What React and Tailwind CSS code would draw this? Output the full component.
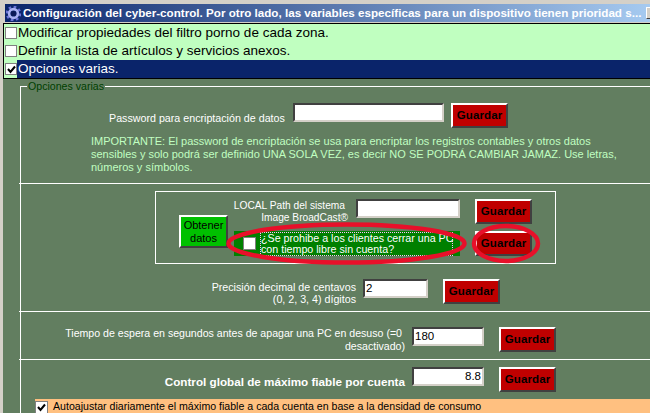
const GuardarButton = ({ className = "" }) => (
  <button
    type="button"
    className={`flex h-[25px] w-[57px] shrink-0 items-center justify-center border-2 border-t-white border-l-white border-r-[#404040] border-b-[#404040] bg-[#c00000] text-[11.5px] font-bold tracking-[0.1px] text-black ${className}`}
  >
    Guardar
  </button>
);

const TextBox = ({ className = "", value = "", right = false }) => (
  <div
    className={`flex h-[19px] shrink-0 items-center border-2 border-t-[#404040] border-l-[#404040] border-r-[#d4d0c8] border-b-[#d4d0c8] bg-white px-px text-[11.5px] text-black ${right ? "justify-end" : ""} ${className}`}
  >
    {value}
  </div>
);

const CheckMark = ({ size }) => (
  <svg width={size} height={size} viewBox="0 0 9 9">
    <path d="M1 4 L3.5 7 L8 1.5" fill="none" stroke="#000" strokeWidth="2" />
  </svg>
);

const CheckRow = ({ label, checked, selected }) => (
  <div className="flex h-[18px] items-center">
    <div className="ml-px flex h-[12px] w-[12px] shrink-0 items-center justify-center border border-[#808080] bg-white">
      {checked ? <CheckMark size={9} /> : null}
    </div>
    <div
      className={`flex h-[18px] grow items-center pl-px text-[13.5px] ${
        selected ? "bg-[#0a246a] text-white" : "text-black"
      }`}
    >
      {label}
    </div>
  </div>
);

const GearIcon = () => (
  <svg width="15" height="15" viewBox="0 0 15 15" className="shrink-0">
    <circle cx="7.5" cy="7.5" r="6.6" fill="none" stroke="#6c74d8" strokeWidth="2.4" strokeDasharray="2.6 2.58" />
    <circle cx="7.5" cy="7.5" r="4.4" fill="none" stroke="#a8b0f0" strokeWidth="2.6" />
    <circle cx="7.5" cy="7.5" r="2.6" fill="#0a1a58" />
  </svg>
);

const App = () => {
  return (
    <div
      className="relative h-[413px] w-[650px] overflow-hidden bg-[#d4d0c8] pt-1 pl-[3px]"
      style={{ fontFamily: '"Liberation Sans", Arial, sans-serif' }}
    >
      <div className="ml-[2px] flex h-[18px] items-center bg-[linear-gradient(90deg,#0a246a,#a6caf0)] pl-px">
        <GearIcon />
        <div className="ml-[2px] w-[623px] shrink-0 text-[11.65px] font-bold whitespace-nowrap text-white">
          Configuración del cyber-control. Por otro lado, las variables específicas para un dispositivo tienen prioridad s...
        </div>
        <div className="h-[12px] w-[6px] shrink-0 border border-t-white border-l-white border-r-[#404040] border-b-[#404040] bg-[#d4d0c8]" />
      </div>

      <div className="mt-px border-y border-l border-black bg-[#c0ffc0]">
        <CheckRow label="Modificar propiedades del filtro porno de cada zona." />
        <CheckRow label="Definir la lista de artículos y servicios anexos." />
        <CheckRow label="Opciones varias." checked selected />
      </div>

      <div className="h-[335px] bg-[#627e60] pt-[7px] pl-[17px]">
        <div className="relative h-full border-t border-l border-white">
          <div className="absolute -top-[8px] left-[6px] bg-[#627e60] px-px text-[10.6px] leading-[14px] text-[#004000]">
            Opciones varias
          </div>

          <div className="-ml-[2px] h-[97px] border-b border-white pt-[16px] pl-[2px]">
            <div className="flex items-start">
              <div className="mt-[8px] w-[272px] pl-[88px] text-[10.7px] leading-[14px] whitespace-nowrap text-white">
                Password para encriptación de datos
              </div>
              <TextBox className="w-[151px]" />
              <GuardarButton className="ml-[7px]" />
            </div>
            <p className="mt-[7px] ml-[70px] text-[11px] leading-[13px] whitespace-nowrap text-[#c0ffc0]">
              IMPORTANTE: El password de encriptación se usa para encriptar los registros contables y otros datos
              <br />
              sensibles y solo podrá ser definido UNA SOLA VEZ, es decir NO SE PODRÁ CAMBIAR JAMAZ. Use letras,
              <br />
              números y símbolos.
            </p>
          </div>

          <div className="mt-[7px] ml-[134px] flex h-[73px] w-[401px] items-start border border-white pt-[7px] pl-[23px]">
            <button
              type="button"
              className="mt-[16px] h-[33px] w-[49px] shrink-0 border-2 border-t-white border-l-white border-r-[#404040] border-b-[#404040] bg-[#00c000] text-[11px] leading-[13px] text-black"
            >
              Obtener datos
            </button>
            <div className="ml-[2px] flex flex-col">
              <div className="flex items-start">
                <div className="mt-px w-[115px] text-right text-[10.2px] leading-[12px] whitespace-nowrap text-white">
                  <div>LOCAL Path del sistema</div>
                  <div className="-mr-[3px]">Image BroadCast®</div>
                </div>
                <TextBox className="ml-[11px] w-[104px]" />
                <GuardarButton className="ml-[15px]" />
              </div>
              <div className="mt-[7px] flex items-start">
                <div className="ml-[4px] flex h-[25px] w-[226px] items-center bg-[#008000]">
                  <div className="ml-[9px] h-[13px] w-[13px] shrink-0 border border-[#808080] bg-white" />
                  <div className="ml-[4px] w-[193px] border border-dotted border-[#ffc0ff] text-[10.7px] leading-[11px] whitespace-nowrap text-white">
                    ¿Se prohibe a los clientes cerrar una PC
                    <br />
                    con tiempo libre sin cuenta?
                  </div>
                </div>
                <GuardarButton className="ml-[15px]" />
              </div>
            </div>
          </div>

          <div className="-ml-[2px] flex h-[48px] items-start border-b border-white pt-[15px] pl-[2px]">
            <div className="mt-[2px] w-[335px] text-right text-[10.7px] leading-[12px] whitespace-nowrap text-white">
              <div>Precisión decimal de centavos</div>
              <div>(0, 2, 3, 4) dígitos</div>
            </div>
            <TextBox className="ml-[7px] w-[65px]" value="2" />
            <GuardarButton className="ml-[15px]" />
          </div>

          <div className="-ml-[2px] flex h-[48px] items-start border-b border-white pt-[15px] pl-[2px]">
            <div className="w-[384px] text-right text-[10.6px] leading-[13px] whitespace-nowrap text-white">
              <div className="pr-[3px]">Tiempo de espera en segundos antes de apagar una PC en desuso (=0</div>
              <div>desactivado)</div>
            </div>
            <TextBox className="ml-[7px] w-[72px]" value="180" />
            <GuardarButton className="ml-[15px]" />
          </div>

          <div className="flex h-[39px] items-start pt-[7px]">
            <div className="mt-[8px] w-[384px] text-right text-[11.7px] leading-[14px] font-bold whitespace-nowrap text-white">
              Control global de máximo fiable por cuenta
            </div>
            <TextBox className="ml-[7px] w-[72px]" right value="8.8" />
            <GuardarButton className="ml-[15px]" />
          </div>

          <div className="ml-[14px] flex h-[15px] items-start bg-[#ffc080]">
            <div className="mt-[2px] flex h-[13px] w-[13px] shrink-0 items-center justify-center border border-[#808080] bg-white">
              <CheckMark size={9} />
            </div>
            <div className="ml-[5px] text-[10.6px] leading-[15px] whitespace-nowrap text-black">
              Autoajustar diariamente el máximo fiable a cada cuenta en base a la densidad de consumo
            </div>
          </div>
        </div>
      </div>

      {/* marcas rojas dibujadas encima de la captura */}
      <svg width="650" height="413" className="pointer-events-none absolute top-0 left-0">
        <ellipse cx="346.5" cy="243.5" rx="118" ry="19" fill="none" stroke="#e8102a" strokeWidth="4.5" />
        <ellipse cx="506" cy="243.5" rx="32" ry="17.5" fill="none" stroke="#e8102a" strokeWidth="4.5" />
      </svg>
    </div>
  );
};

export default App;
